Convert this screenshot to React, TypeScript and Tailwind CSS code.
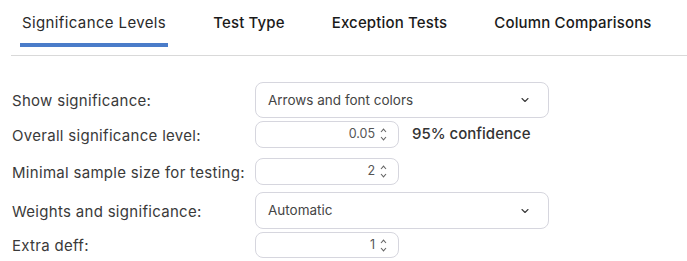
import { ChevronDown } from "lucide-react";

const tabs = ["Significance Levels", "Test Type", "Exception Tests", "Column Comparisons"];

function SelectBox({ value }: { value: string }) {
  return (
    <div className="flex h-full w-[294px] items-center justify-between rounded-lg border border-[#d6d6de] pl-[12px] pr-[17px] text-[13.5px] text-[#454545]">
      <span>{value}</span>
      <ChevronDown size={12} strokeWidth={2.2} className="text-[#3a3a3a]" />
    </div>
  );
}

function Spinner() {
  return (
    <div className="flex flex-col items-center gap-[3px]">
      <svg width="7" height="5" viewBox="0 0 7 5" fill="none" stroke="#666" strokeWidth="1.1">
        <path d="M1 4 L3.5 1.2 L6 4" />
      </svg>
      <svg width="7" height="5" viewBox="0 0 7 5" fill="none" stroke="#666" strokeWidth="1.1">
        <path d="M1 1 L3.5 3.8 L6 1" />
      </svg>
    </div>
  );
}

function NumberBox({ value }: { value: string }) {
  return (
    <div className="flex h-full w-[144px] items-center justify-end gap-[5px] rounded-lg border border-[#d6d6de] pr-[11px] text-[12.5px] text-[#555555]">
      <span>{value}</span>
      <Spinner />
    </div>
  );
}

function Row({ label, className, children }: { label: string; className: string; children: React.ReactNode }) {
  return (
    <div className={`flex items-center ${className}`}>
      <span className="w-[243px] pt-[3px] text-[15px] tracking-[0.02em] text-[#3a3a3a]">{label}</span>
      {children}
    </div>
  );
}

export default function App() {
  return (
    <div
      className="h-[261px] w-[687px] overflow-hidden bg-white"
      style={{ fontFamily: "Inter, 'Open Sans', sans-serif" }}
    >
      <div className="ml-[11px] flex gap-[43px] border-b border-[#d9d9d9] pb-[8px] pl-[9px]">
        {tabs.map((tab, index) => (
          <div
            key={tab}
            className={`border-b-4 px-[2px] pb-[10px] pt-[13px] text-[15px] leading-[20px] ${
              index === 0
                ? "border-[#4a7cc9] tracking-[0.025em] text-[#2a2a2a]"
                : "border-transparent font-medium tracking-[0.01em] text-[#1a1a1a]"
            }`}
          >
            {tab}
          </div>
        ))}
      </div>

      <div className="flex flex-col pl-[12px] pt-[26px]">
        <Row label="Show significance:" className="h-[36px]">
          <SelectBox value="Arrows and font colors" />
        </Row>
        <Row label="Overall significance level:" className="mt-[3px] h-[27px]">
          <NumberBox value="0.05" />
          <span className="ml-[13px] text-[15px] font-medium text-[#333333]">95% confidence</span>
        </Row>
        <Row label="Minimal sample size for testing:" className="mt-[10px] h-[27px]">
          <NumberBox value="2" />
        </Row>
        <Row label="Weights and significance:" className="mt-[7px] h-[37px]">
          <SelectBox value="Automatic" />
        </Row>
        <Row label="Extra deff:" className="mt-[3px] h-[26px]">
          <NumberBox value="1" />
        </Row>
      </div>
    </div>
  );
}
